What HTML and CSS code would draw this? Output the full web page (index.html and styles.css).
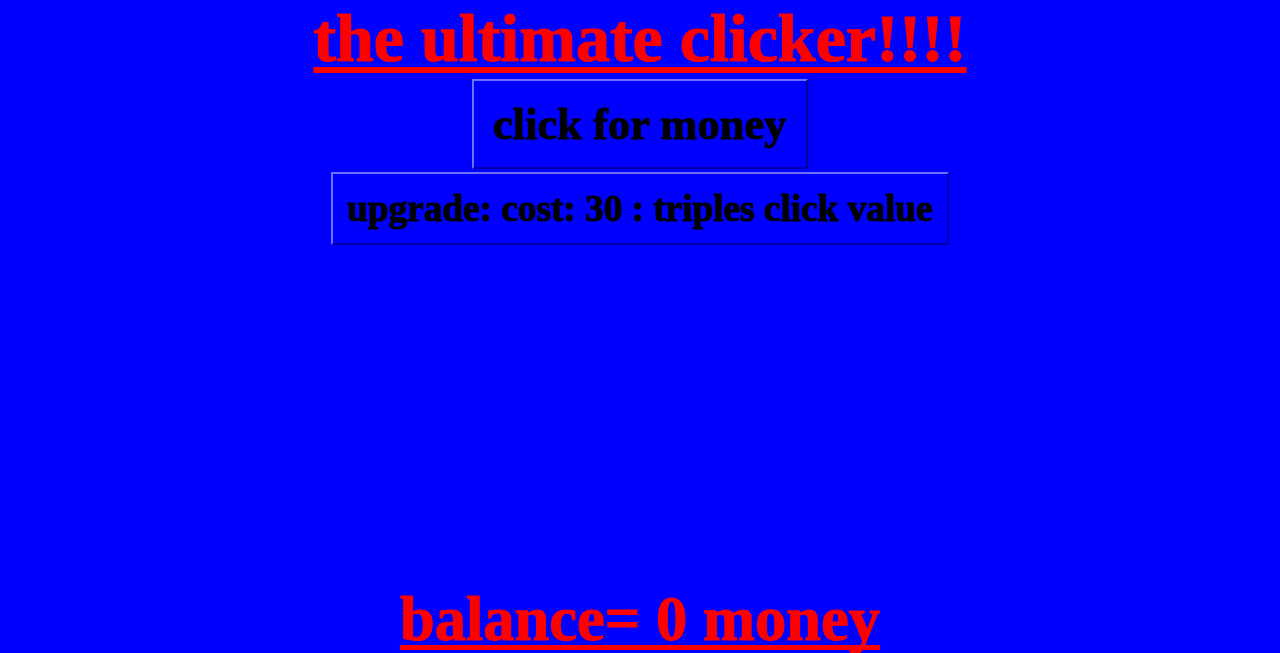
FILE: index.html
```html
<!DOCTYPE html>
<html lang="en">
<head>
<meta charset="utf-8">
<title>the ultimate clicker!!!!</title>
<link rel="stylesheet" href="styles.css">
</head>
<body>
<main class="page">
  <h1 class="title">the ultimate clicker!!!!</h1>
  <button class="btn btn-click" type="button">click for money</button>
  <button class="btn btn-upgrade" type="button">upgrade: cost: 30 : triples click value</button>
  <h2 class="balance">balance= 0 money</h2>
</main>
</body>
</html>
```

FILE: styles.css
```css
html, body {
  margin: 0;
  padding: 0;
  background: #0000ff;
}

.page {
  height: 100vh;
  display: flex;
  flex-direction: column;
  align-items: center;
  gap: 3px;
  font-family: "Liberation Serif", "Times New Roman", serif;
  font-weight: 700;
  overflow: hidden;
}

.title {
  margin: 0;
  font-size: 68px;
  font-weight: 700;
  line-height: 76px;
  letter-spacing: 0;
  color: #ff0000;
  -webkit-text-stroke: 1.2px #ff0000;
  text-decoration: underline;
  text-decoration-thickness: 6px;
  text-underline-offset: 6px;
  text-decoration-skip-ink: none;
  white-space: nowrap;
}

.btn {
  font-family: "Liberation Serif", "Times New Roman", serif;
  font-weight: 700;
  color: #000000;
  -webkit-text-stroke: 0.9px #000000;
  background: #0000ff;
  border-style: solid;
  border-width: 2px;
  border-top-color: #6f6fff;
  border-left-color: #6f6fff;
  border-right-color: #0000a6;
  border-bottom-color: #0000a6;
  margin: 0;
  white-space: nowrap;
  cursor: pointer;
}

.btn-click {
  font-size: 44.5px;
  line-height: normal;
  padding: 17px 19.5px;
}

.btn-upgrade {
  font-size: 37.5px;
  line-height: normal;
  letter-spacing: -0.1px;
  padding: 12.5px 14.5px 13px;
}

.balance {
  margin: auto 0 0 0;
  font-size: 62.5px;
  font-weight: 700;
  line-height: 67px;
  color: #ff0000;
  -webkit-text-stroke: 1.1px #ff0000;
  text-decoration: underline;
  text-decoration-thickness: 5px;
  text-underline-offset: 5px;
  text-decoration-skip-ink: none;
  white-space: nowrap;
}
```
